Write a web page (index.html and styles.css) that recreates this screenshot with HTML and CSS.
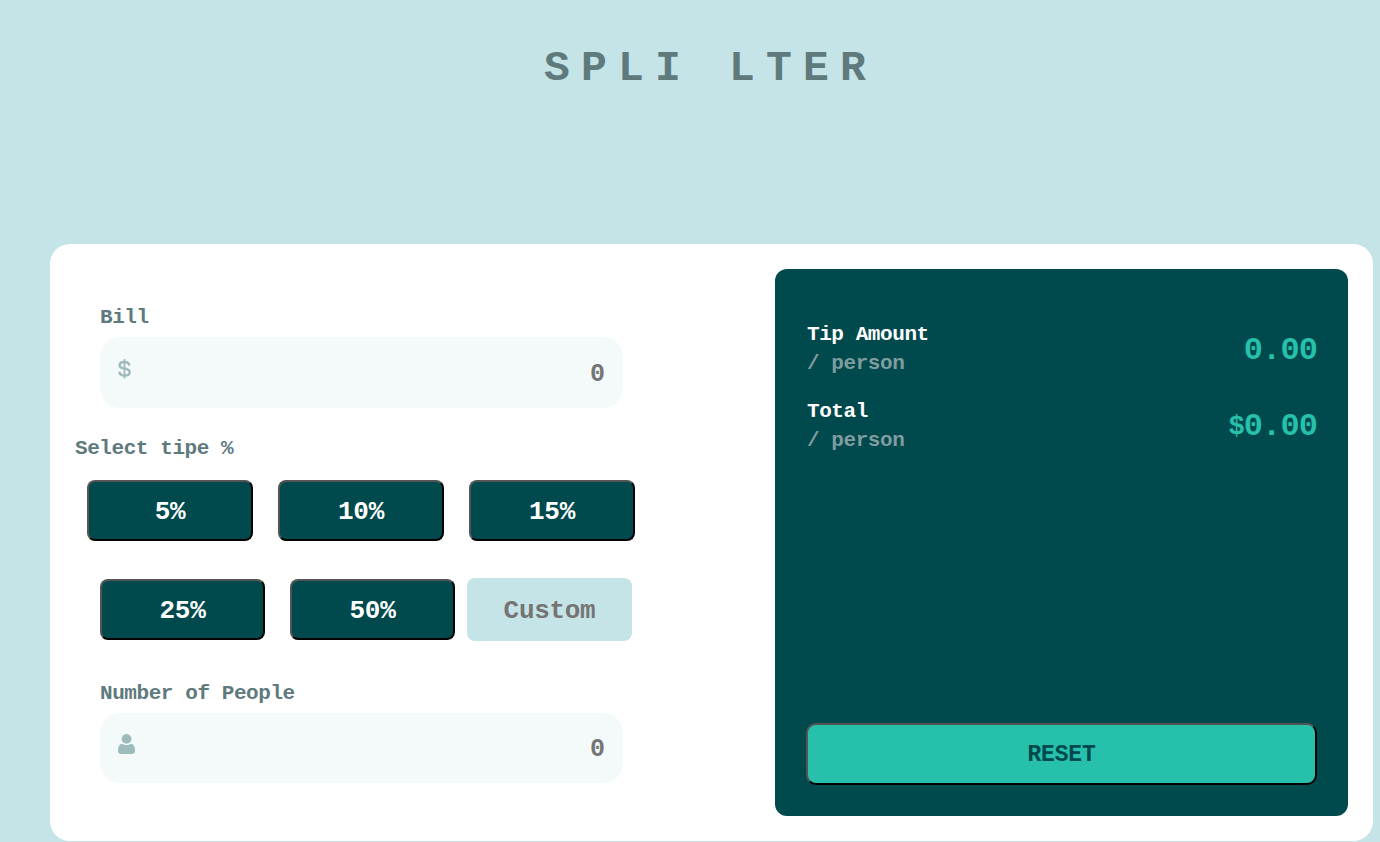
FILE: index.html
```html
<!DOCTYPE html>
<html lang="en">
<head>
<meta charset="utf-8">
<title>Splitter</title>
<link rel="stylesheet" href="styles.css">
</head>
<body>
<h1 class="title">SPLI LTER</h1>
<main class="card">
  <form class="form">
    <section class="field">
      <label class="label" for="bill">Bill</label>
      <div class="input-box bill-box">
        <svg class="icon dollar" width="13" height="20" viewBox="0 0 13 20" fill="none" stroke="#9ebbbd" stroke-width="2.5"><path d="M6.5 0v19.5" stroke-width="1.8"/><path d="M11.3 6.6C11.1 4.4 9.3 3.1 6.5 3.1C3.7 3.1 1.6 4.2 1.6 6.3C1.6 8.4 3.2 9.1 6.5 9.6C10 10.1 11.6 11.1 11.6 13.2C11.6 15.5 9.5 16.6 6.5 16.6C3.5 16.6 1.5 15.4 1.3 12.7"/></svg>
        <input class="input" id="bill" type="text" placeholder="0">
      </div>
    </section>
    <section class="tips">
      <h2 class="label">Select tipe %</h2>
      <div class="tip-row">
        <button class="tip" type="button">5%</button>
        <button class="tip" type="button">10%</button>
        <button class="tip" type="button">15%</button>
      </div>
      <div class="tip-row second">
        <button class="tip" type="button">25%</button>
        <button class="tip" type="button">50%</button>
        <input class="custom" type="text" placeholder="Custom">
      </div>
    </section>
    <section class="field">
      <label class="label" for="people">Number of People</label>
      <div class="input-box">
        <svg class="icon" width="17" height="20" viewBox="0 0 17 20" fill="#9ebbbd"><circle cx="8.5" cy="4.9" r="4.9"/><path d="M4 9.8C5.3 10.6 6.8 11.1 8.5 11.1S11.7 10.6 13 9.8C15.8 10.3 17 13.2 17 16.7C17 19 15.8 20 13.8 20H3.2C1.2 20 0 19 0 16.7C0 13.2 1.2 10.3 4 9.8Z"/></svg>
        <input class="input" id="people" type="text" placeholder="0">
      </div>
    </section>
  </form>
  <aside class="panel">
    <div class="result">
      <div class="result-name">Tip Amount<span class="per">/ person</span></div>
      <output class="amount">0.00</output>
    </div>
    <div class="result">
      <div class="result-name">Total<span class="per">/ person</span></div>
      <output class="amount total"><span class="currency">$</span>0.00</output>
    </div>
    <button class="reset" type="button">RESET</button>
  </aside>
</main>
</body>
</html>
```
FILE: styles.css
```css
* { box-sizing: border-box; }
html { background: #c5e4e7; }
body {
  margin: 0;
  height: 842px;
  overflow: hidden;
  font-family: "Liberation Mono", monospace;
  font-weight: 700;
  color: #5e7a7d;
}
button, input { font: inherit; margin: 0; }
.title {
  margin: 0;
  padding: 38px 0 0 544px;
  height: 244px;
  font-size: 43px;
  line-height: 62px;
  letter-spacing: 11.2px;
  white-space: pre;
}
.card {
  display: flex;
  justify-content: space-between;
  width: 1323px;
  height: 597px;
  margin-left: 50px;
  padding: 25px;
  background: #fff;
  border-radius: 20px;
}
.form { width: 573px; padding-top: 34px; }
.field { width: 523px; margin-left: 25px; }
.label {
  display: block;
  margin: 0;
  height: 34px;
  font-size: 21px;
  line-height: 29px;
  letter-spacing: -0.43px;
}
.input-box {
  display: flex;
  height: 70px;
  padding: 21px 18px 0 18px;
  background: #f4fafa;
  border-radius: 20px;
}
.bill-box { height: 71px; padding-top: 22px; }
.icon { flex: none; }
.input {
  flex: 1;
  min-width: 0;
  height: 28px;
  padding: 2px 0 0;
  border: 0;
  outline: 0;
  background: transparent;
  text-align: right;
  font-size: 25px;
}
.input::placeholder, .custom::placeholder { color: #757575; opacity: 1; }
.tips { padding-top: 25px; height: 271px; }
.tips .label { height: 47px; line-height: 31px; }
.tip-row { display: flex; gap: 25px; margin-left: 12px; }
.tip-row.second { align-items: center; margin: 37px 0 0 25px; }
.tip {
  width: 166px;
  height: 61px;
  padding: 2px 0 0;
  color: #fff;
  background: #00494d;
  border: 2px outset #000;
  border-radius: 8px;
  font-size: 26px;
  letter-spacing: -0.3px;
}
.second .tip { width: 165px; }
.custom {
  width: 165px;
  height: 63px;
  margin-left: -13px;
  padding: 2px 0 0;
  border: 0;
  border-radius: 8px;
  background: #c5e4e7;
  text-align: center;
  font-size: 26px;
  letter-spacing: -0.3px;
}
.panel {
  display: flex;
  flex-direction: column;
  width: 573px;
  padding: 51px 31px 31px 32px;
  background: #00494d;
  border-radius: 12px;
}
.result {
  display: flex;
  justify-content: space-between;
  height: 77px;
}
.result-name {
  font-size: 21px;
  line-height: 29px;
  letter-spacing: -0.43px;
  color: #fff;
}
.per { display: block; color: #7f9c9f; }
.amount {
  padding-top: 10px;
  font-size: 32px;
  line-height: 42px;
  letter-spacing: -0.9px;
  color: #26c0ab;
}
.total { padding-top: 9px; }
.currency { font-size: 27px; vertical-align: 1px; }
.reset {
  height: 62px;
  margin: auto 0 0 -1px;
  padding: 2px 0 0;
  color: #00494d;
  background: #26c0ab;
  border: 2px outset #000;
  border-radius: 10px;
  font-size: 23px;
  letter-spacing: -0.2px;
}
```
